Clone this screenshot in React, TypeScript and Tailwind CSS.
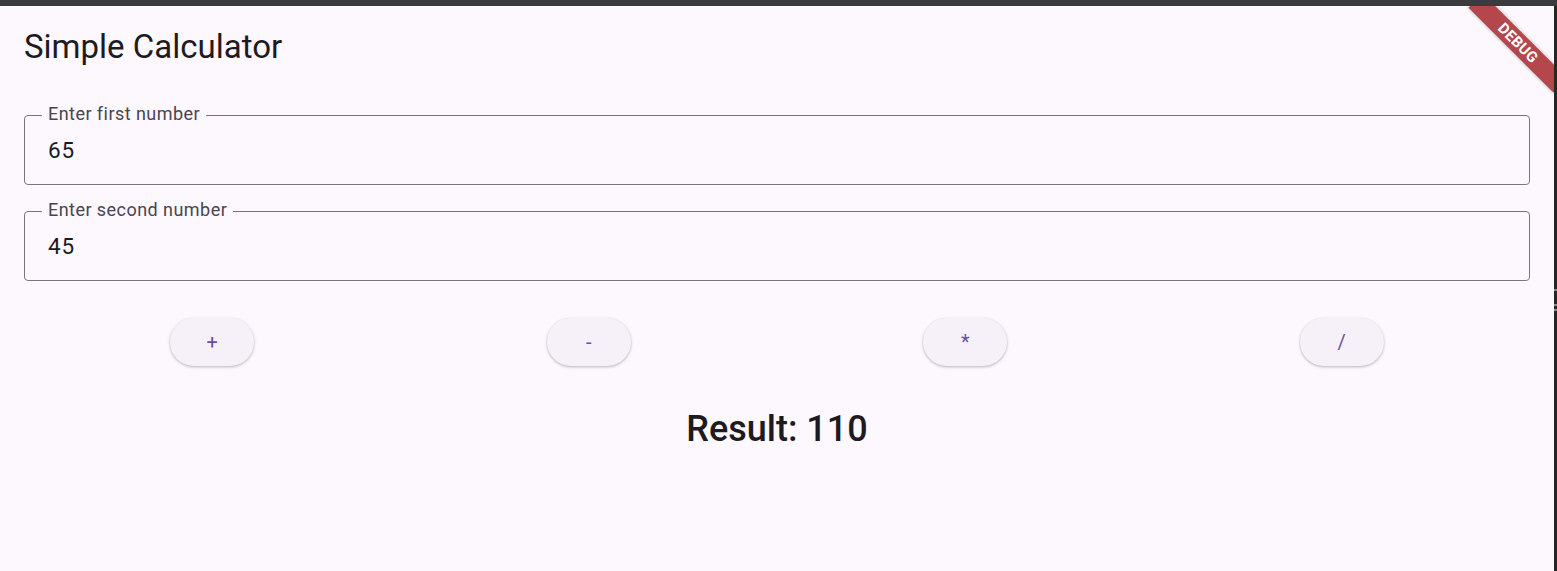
import React from "react";

const font = { fontFamily: "Roboto, 'Noto Sans', sans-serif" };

function Field({ label, value }: { label: string; value: string }) {
  return (
    <div className="relative h-[70px] rounded-[4px] border border-[#79747e]">
      <span className="absolute left-[17px] top-[-14px] bg-[#fdf7fe] px-[6px] text-[18px] leading-[24px] text-[#49454f] tracking-[0.45px]">
        {label}
      </span>
      <div className="pl-[23px] pt-[20px] text-[22.5px] leading-[28px] text-[#1d1b20] tracking-[0.8px]">{value}</div>
    </div>
  );
}

function Btn({ children }: { children: React.ReactNode }) {
  return (
    <button className="flex h-[48px] w-[84px] items-center justify-center rounded-full bg-[#f6f1f9] text-[20px] text-[#6750a4] shadow-[0_1px_3px_rgba(0,0,0,0.28)]">
      {children}
    </button>
  );
}

export default function App() {
  return (
    <div className="flex h-[571px] w-[1557px] flex-col bg-[#3b3a3c]" style={font}>
      <div className="h-[6px] w-full bg-[#3b3a3c]" />
      <div className="flex flex-1">
        <div className="relative w-[1554px] overflow-hidden bg-[#fdf7fe] px-[24px]">
          <div className="pt-[21px] text-[33px] leading-[40px] text-[#1d1b20]">Simple Calculator</div>
          <div className="mt-[48px] flex flex-col gap-[26px]">
            <Field label="Enter first number" value="65" />
            <Field label="Enter second number" value="45" />
          </div>
          <div className="mt-[37px] flex justify-around">
            <Btn>+</Btn>
            <Btn>-</Btn>
            <Btn>*</Btn>
            <Btn>/</Btn>
          </div>
          <div className="mt-[41px] text-center text-[36px] font-medium leading-[44px] text-[#1d1b20]">Result: 110</div>

          <div className="pointer-events-none absolute right-0 top-0 h-[90px] w-[90px] overflow-hidden">
            <div className="absolute left-[-6px] top-[27px] flex h-[20px] w-[120px] rotate-45 items-center justify-center bg-[#b4474c] shadow-[0_0_4px_rgba(0,0,0,0.3)]">
              <span className="text-[15px] font-bold leading-none tracking-[0.3px] text-white">DEBUG</span>
            </div>
          </div>
        </div>
        <div className="flex w-[3px] flex-col bg-[#262626]">
          <div className="h-[283px]" />
          <div className="h-[2px] bg-[#8a8a8a]" />
          <div className="h-[13px]" />
          <div className="h-[2px] bg-[#8a8a8a]" />
          <div className="h-[3px]" />
          <div className="h-[2px] bg-[#8a8a8a]" />
        </div>
      </div>
    </div>
  );
}
